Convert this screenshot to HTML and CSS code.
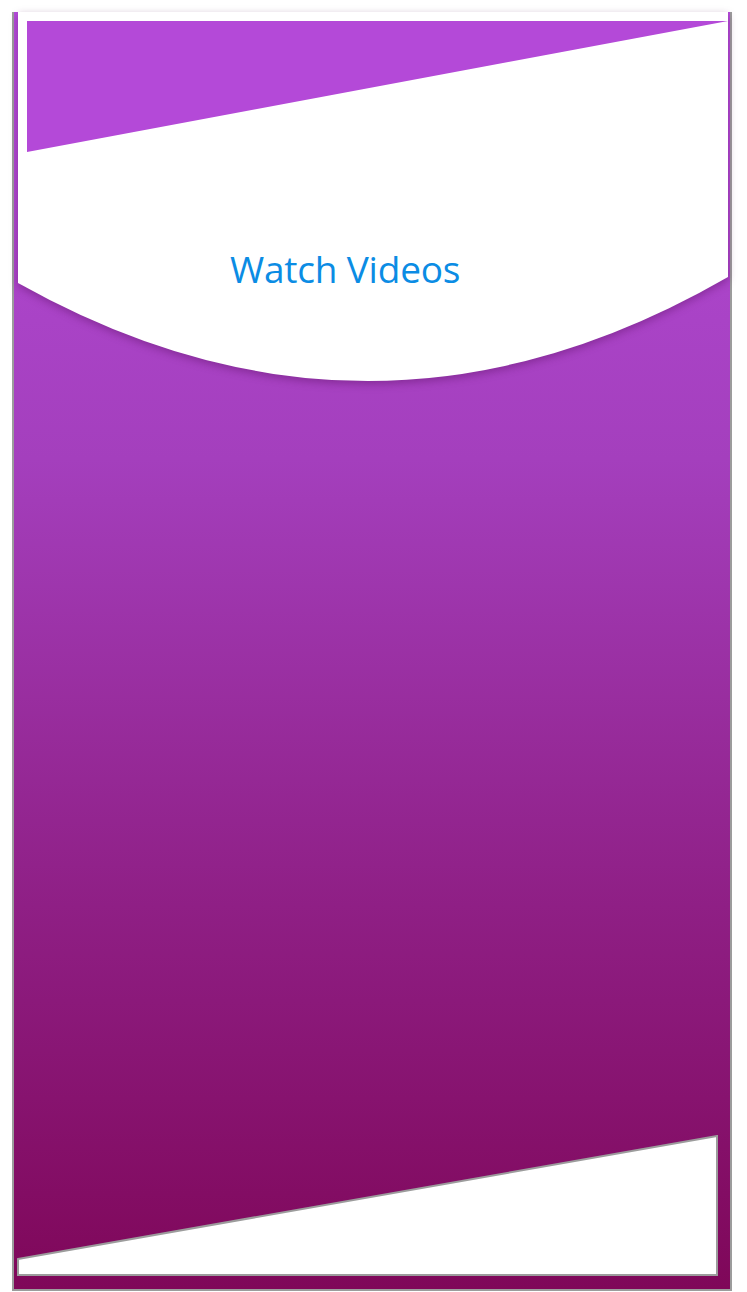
FILE: index.html
```html
<!DOCTYPE html>
<html>
<head>
<meta charset="utf-8">
<link rel="stylesheet" href="styles.css">
</head>
<body>
<div class="frame">
  <div class="header">
    <svg class="header-bg" width="710" height="380" viewBox="0 0 710 380">
      <path class="header-shape" d="M0,0 H710 V265 Q355,470 0,271 Z"/>
      <polygon class="header-wedge" points="9,9 710,9 9,140"/>
    </svg>
    <h1 class="title">Watch Videos</h1>
  </div>
  <svg class="footer" width="702" height="142" viewBox="0 0 702 142">
    <polygon class="footer-shape" points="1,124 700,1 700,140 1,140"/>
  </svg>
</div>
</body>
</html>
```

FILE: styles.css
```css
html, body {
  margin: 0;
  padding: 0;
  background: #ffffff;
}

.frame {
  margin: 12px 0 0 12px;
  width: 720px;
  height: 1279px;
  box-sizing: border-box;
  border: 2px solid #9c9c9c;
  border-top: none;
  background: linear-gradient(to bottom, #b44cda 0%, #a43fbd 35%, #8f1f85 70%, #7f0759 100%);
  display: flex;
  flex-direction: column;
  justify-content: space-between;
}

.header {
  position: relative;
  width: 710px;
  height: 380px;
  margin: 0 2px 0 4px;
}

.header-bg {
  position: absolute;
  left: 0;
  top: 0;
  overflow: visible;
  filter: drop-shadow(0 3px 4px rgba(70, 0, 70, 0.35));
}

.header-shape {
  fill: #ffffff;
}

.header-wedge {
  fill: #b449d8;
}

.title {
  position: relative;
  margin: 0;
  padding: 232px 0 0 212px;
  font-family: "Open Sans", "Noto Sans", sans-serif;
  font-weight: 400;
  font-size: 37px;
  line-height: 50px;
  color: #0b8ce4;
  letter-spacing: -0.2px;
}

.footer {
  display: block;
  margin: 0 0 12px 3px;
}

.footer-shape {
  fill: #ffffff;
  stroke: #9c9c9c;
  stroke-width: 2;
}
```
